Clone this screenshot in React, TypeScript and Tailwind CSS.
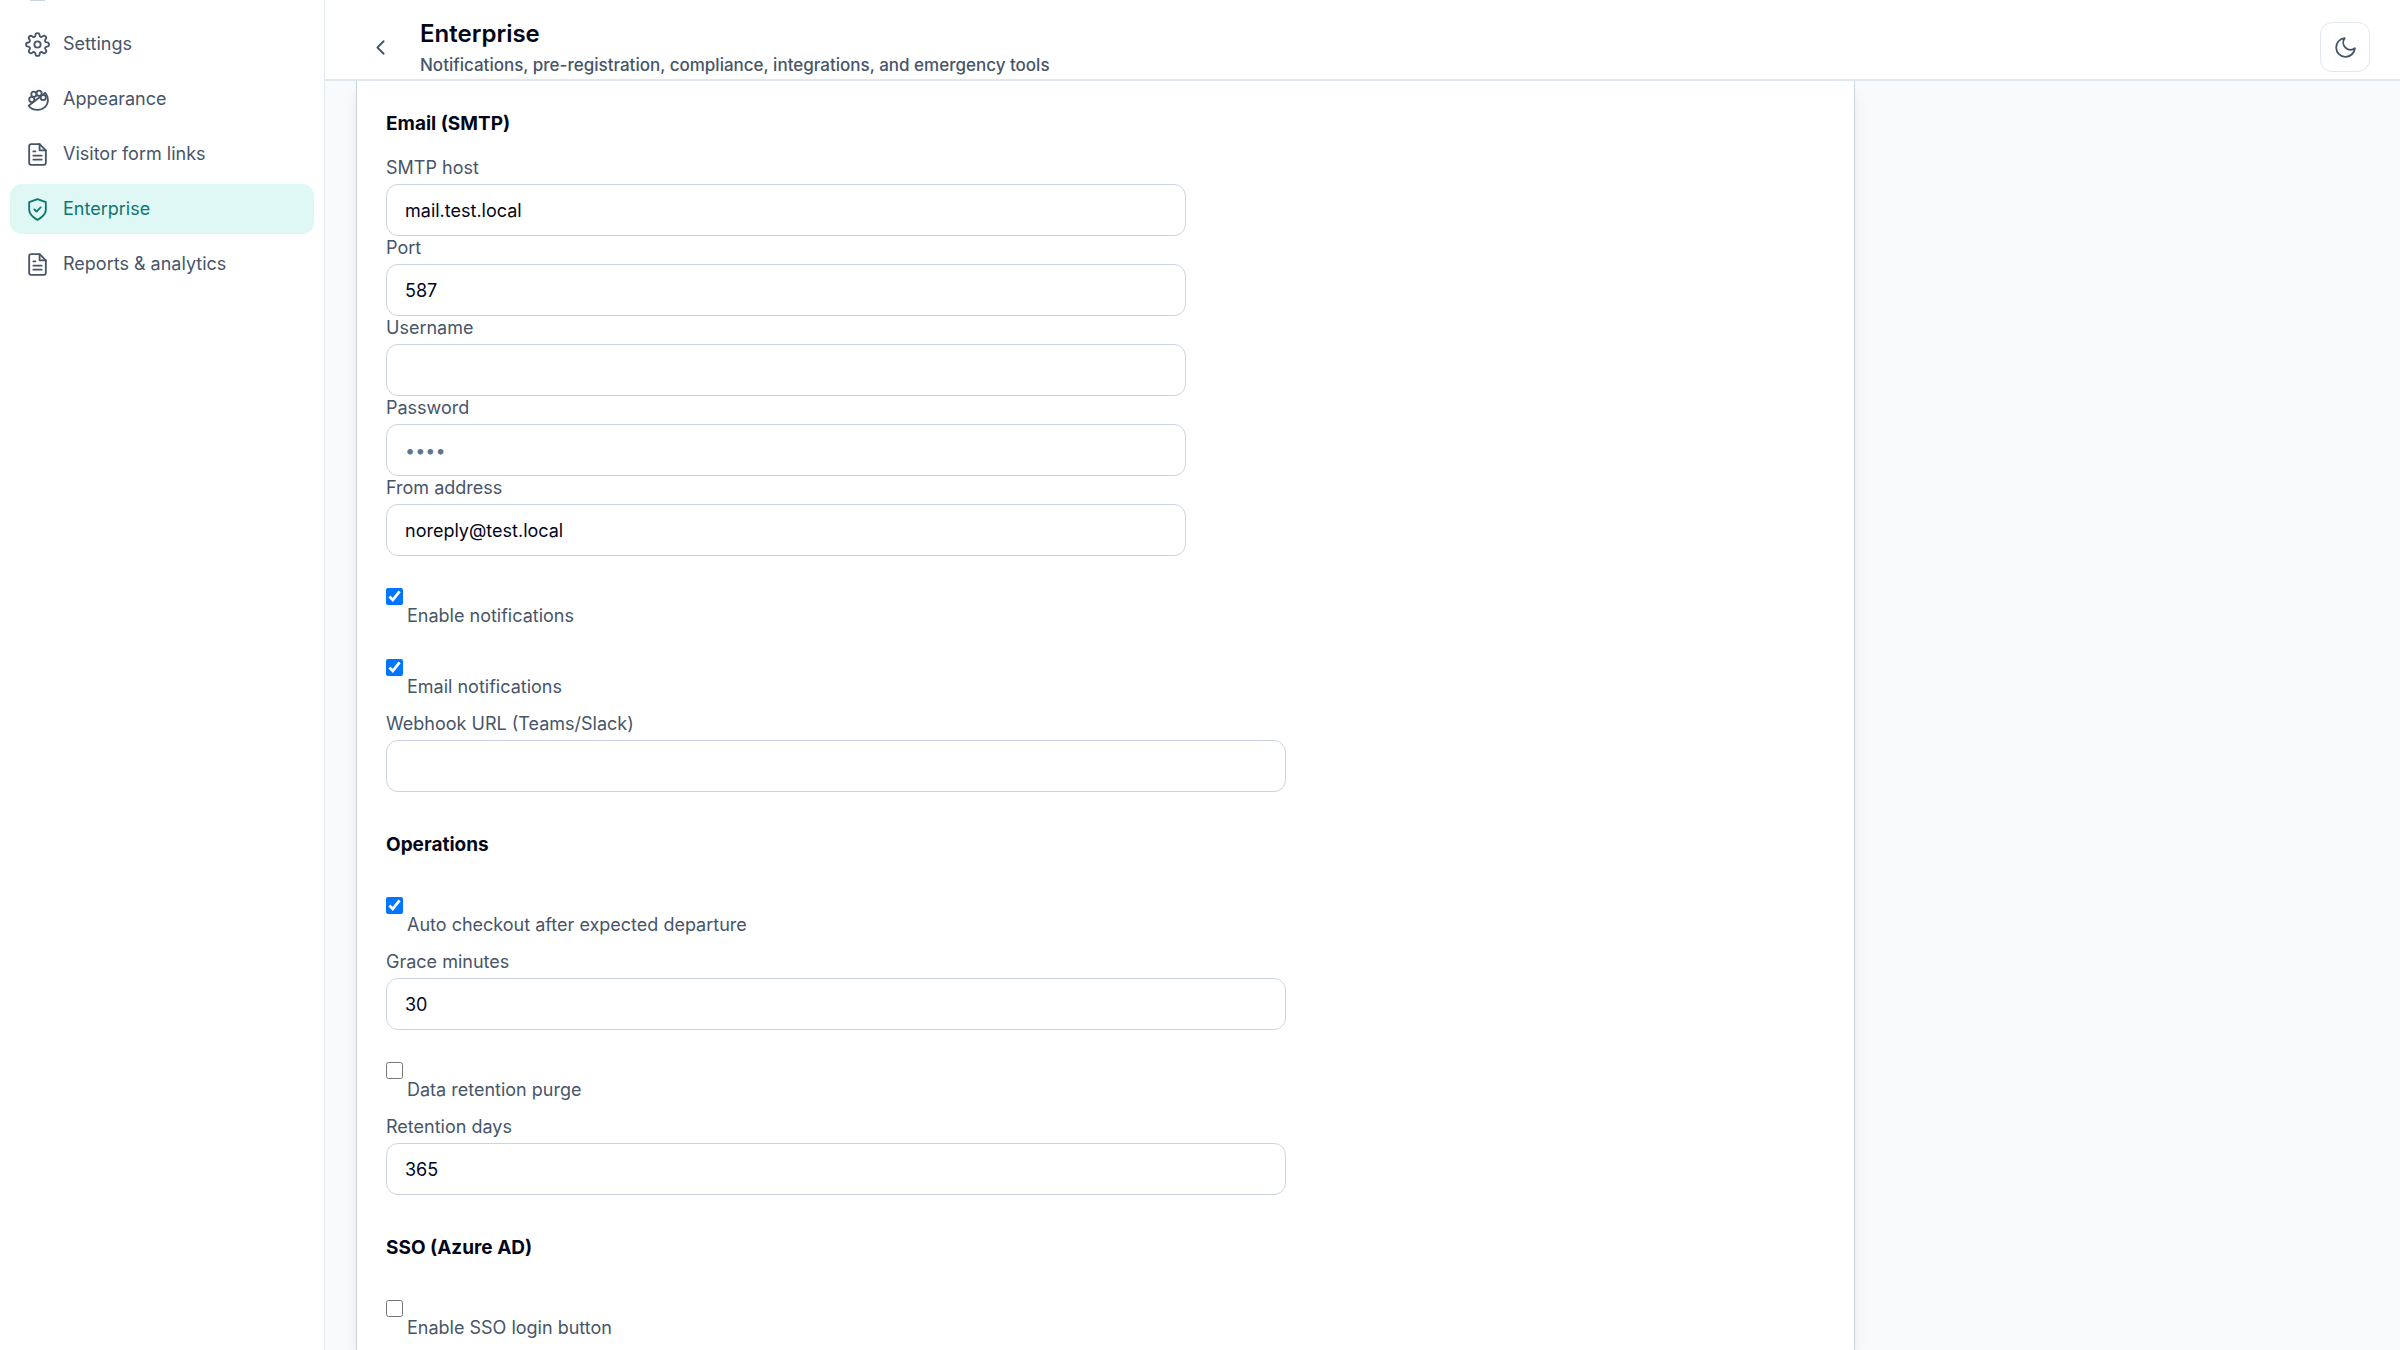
import { useState } from "react";
import type { ReactNode } from "react";

const Icon = ({ children }: { children: ReactNode }) => (
  <svg
    viewBox="0 0 24 24"
    fill="none"
    stroke="currentColor"
    strokeWidth="1.75"
    strokeLinecap="round"
    strokeLinejoin="round"
    aria-hidden="true"
    className="h-[25px] w-[25px] shrink-0"
  >
    {children}
  </svg>
);

const SettingsIcon = () => (
  <Icon>
    <circle cx="12" cy="12" r="3" />
    <path d="M19.4 15a1.65 1.65 0 0 0 .33 1.82l.06.06a2 2 0 0 1-2.83 2.83l-.06-.06a1.65 1.65 0 0 0-1.82-.33 1.65 1.65 0 0 0-1 1.51V21a2 2 0 0 1-4 0v-.09A1.65 1.65 0 0 0 9 19.4a1.65 1.65 0 0 0-1.82.33l-.06.06a2 2 0 0 1-2.83-2.83l.06-.06a1.65 1.65 0 0 0 .33-1.82 1.65 1.65 0 0 0-1.51-1H3a2 2 0 0 1 0-4h.09A1.65 1.65 0 0 0 4.6 9a1.65 1.65 0 0 0-.33-1.82l-.06-.06a2 2 0 0 1 2.83-2.83l.06.06a1.65 1.65 0 0 0 1.82.33H9a1.65 1.65 0 0 0 1-1.51V3a2 2 0 0 1 4 0v.09a1.65 1.65 0 0 0 1 1.51 1.65 1.65 0 0 0 1.82-.33l.06-.06a2 2 0 0 1 2.83 2.83l-.06.06a1.65 1.65 0 0 0-.33 1.82V9a1.65 1.65 0 0 0 1.51 1H21a2 2 0 0 1 0 4h-.09a1.65 1.65 0 0 0-1.51 1z" />
  </Icon>
);

const PaletteIcon = () => (
  <Icon>
    <circle cx="13.5" cy="6" r="2.5" />
    <circle cx="17.5" cy="10" r="2.5" />
    <circle cx="8.5" cy="7" r="2.5" />
    <circle cx="6.500" cy="12" r="2.5" />
    <path d="M3.500 18C5.200 20.500 8.500 22 12 22c5.500 0 10-4 10-9.500 0-3-.8-5-2.500-7z" />
  </Icon>
);

const FileIcon = () => (
  <Icon>
    <path d="M14 2H6a2 2 0 0 0-2 2v16a2 2 0 0 0 2 2h12a2 2 0 0 0 2-2V8z" />
    <path d="M14 2v6h6M16 13H8M16 17H8M10 9H8" />
  </Icon>
);

const ShieldIcon = () => (
  <Icon>
    <path d="M12 22s8-4 8-10V5l-8-3-8 3v7c0 6 8 10 8 10z" />
    <path d="m9 12 2 2 4-4" />
  </Icon>
);

const navItems = [
  { label: "Settings", icon: <SettingsIcon /> },
  { label: "Appearance", icon: <PaletteIcon /> },
  { label: "Visitor form links", icon: <FileIcon /> },
  { label: "Enterprise", icon: <ShieldIcon />, active: true },
  { label: "Reports & analytics", icon: <FileIcon /> },
];

type FieldProps = {
  id: string;
  label: string;
  value?: string;
  type?: string;
  placeholder?: string;
  wide?: boolean;
};

const Field = ({ id, label, value = "", type = "text", placeholder, wide }: FieldProps) => {
  const [text, setText] = useState(value);
  return (
    <div className={wide ? "max-w-[900px]" : "max-w-[800px]"}>
      <label htmlFor={id} className="block h-7 text-lg leading-6 text-[#475569]">
        {label}
      </label>
      <input
        id={id}
        type={type}
        value={text}
        placeholder={placeholder}
        onChange={(e) => setText(e.target.value)}
        className="block h-[52px] w-full rounded-xl border border-[#cbd5e1] bg-white px-[18px] text-lg text-slate-950 outline-none placeholder:text-slate-500 focus:border-teal-600"
      />
    </div>
  );
};

const Check = ({ id, label, checked = false }: { id: string; label: string; checked?: boolean }) => {
  const [on, setOn] = useState(checked);
  return (
    <div className="flex h-[71px] items-start gap-1 pt-8">
      <input
        id={id}
        type="checkbox"
        checked={on}
        onChange={(e) => setOn(e.target.checked)}
        className="h-[17px] w-[17px] shrink-0"
      />
      <label htmlFor={id} className="pt-4 text-lg leading-6 text-[#475569]">
        {label}
      </label>
    </div>
  );
};

const SectionTitle = ({ children }: { children: ReactNode }) => (
  <h2 className="text-[19px] leading-7 font-bold text-slate-950">{children}</h2>
);

const App = () => {
  return (
    <div className="flex h-screen overflow-hidden bg-slate-50 font-['Inter',sans-serif] text-slate-950">
      {/* Sidebar */}
      <aside className="w-[325px] shrink-0 border-r border-slate-200 bg-white">
        <div className="ml-[30px] h-px w-[15px] bg-slate-300" />
        <nav className="flex flex-col gap-[5px] px-[10px] pt-[18px]">
          {navItems.map((item) => (
            <a
              key={item.label}
              href="#"
              className={
                item.active
                  ? "flex h-[50px] items-center gap-[13px] rounded-xl bg-[#dff7f5] px-[15px] text-lg text-[#0f766e]"
                  : "flex h-[50px] items-center gap-[13px] rounded-xl px-[15px] text-lg text-[#475569]"
              }
            >
              {item.icon}
              {item.label}
            </a>
          ))}
        </nav>
      </aside>

      <div className="flex min-w-0 flex-1 flex-col">
        {/* Top bar */}
        <header className="z-10 flex h-[81px] shrink-0 items-start border-b-2 border-slate-200 bg-white px-[30px]">
          <button type="button" aria-label="Back" className="mt-[22px] flex h-[50px] w-[50px] items-center justify-center text-[#475569]">
            <Icon>
              <path d="m15 18-6-6 6-6" />
            </Icon>
          </button>
          <div className="ml-[15px] flex-1 pt-[18px]">
            <h1 className="text-2xl leading-8 font-semibold">Enterprise</h1>
            <p className="text-[17px] leading-[30px] font-medium text-[#475569]">
              Notifications, pre-registration, compliance, integrations, and emergency tools
            </p>
          </div>
          <button
            type="button"
            aria-label="Toggle dark mode"
            className="mt-[22px] flex h-[50px] w-[50px] items-center justify-center rounded-xl border border-slate-200 text-[#475569]"
          >
            <Icon>
              <path d="M21 12.79A9 9 0 1 1 11.21 3 7 7 0 0 0 21 12.79z" />
            </Icon>
          </button>
        </header>

        {/* Settings card */}
        <main className="min-h-0 flex-1 overflow-hidden pl-[31px]">
          <form className="min-h-full w-full max-w-[1499px] border-x border-[#cbd5e1] bg-white px-[29px] pt-[29px] shadow-lg">
            <SectionTitle>Email (SMTP)</SectionTitle>
            <div className="pt-[18px]">
              <Field id="host" label="SMTP host" value="mail.test.local" />
              <Field id="port" label="Port" value="587" />
              <Field id="user" label="Username" />
              <Field id="password" label="Password" type="password" placeholder="••••" />
              <Field id="from" label="From address" value="noreply@test.local" />
            </div>
            <Check id="notify" label="Enable notifications" checked />
            <Check id="email-notify" label="Email notifications" checked />
            <div className="pt-3.5">
              <Field id="webhook" label="Webhook URL (Teams/Slack)" wide />
            </div>

            <div className="pt-[39px] pb-1.5">
              <SectionTitle>Operations</SectionTitle>
            </div>
            <Check id="auto-checkout" label="Auto checkout after expected departure" checked />
            <div className="pt-3.5">
              <Field id="grace" label="Grace minutes" value="30" wide />
            </div>
            <Check id="purge" label="Data retention purge" />
            <div className="pt-3.5">
              <Field id="retention" label="Retention days" value="365" wide />
            </div>

            <div className="pt-[39px] pb-1.5">
              <SectionTitle>SSO (Azure AD)</SectionTitle>
            </div>
            <Check id="sso" label="Enable SSO login button" />
          </form>
        </main>
      </div>
    </div>
  );
};

export default App;
